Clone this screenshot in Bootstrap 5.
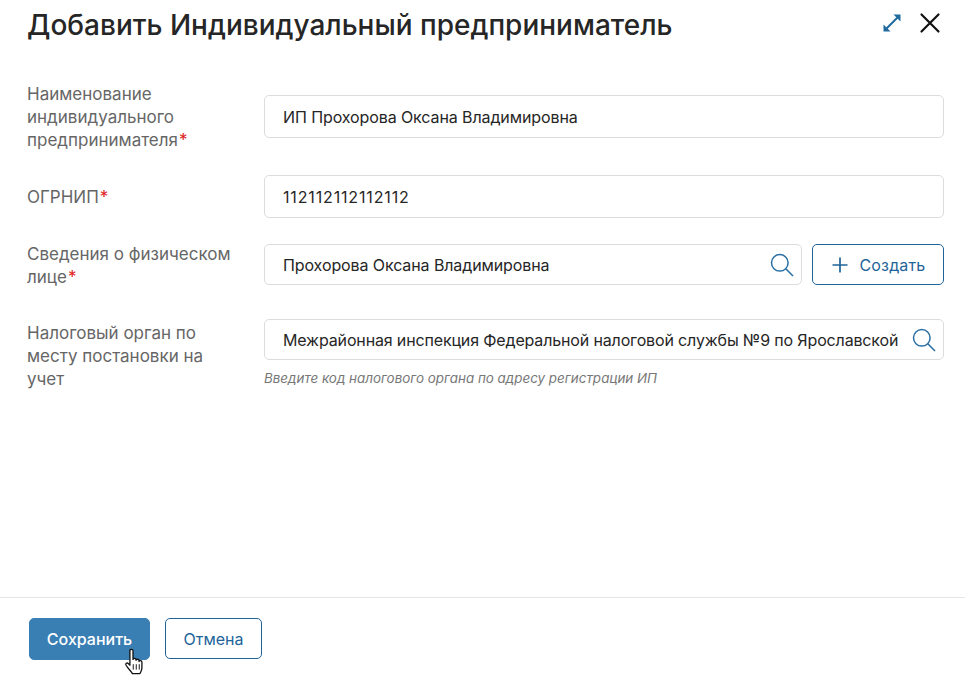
<!DOCTYPE html>
<html lang="ru">
<head>
<meta charset="utf-8">
<title>Добавить Индивидуальный предприниматель</title>
<link rel="stylesheet" href="https://cdn.jsdelivr.net/npm/bootstrap@5.3.0/dist/css/bootstrap.min.css">
<style>
html,body{height:100%;}
body{font-family:Inter,"Noto Sans",sans-serif;background:#fff;color:#262626;width:965px;height:675px;overflow:hidden;}
.dlg{height:675px;}
.dlg-head{height:50px;padding:0 24px 0 27px;}
.dlg-title{font-size:28px;font-weight:500;line-height:50px;margin:0;color:#262626;}
.head-tools{padding-bottom:4px;}
.head-ico{display:block;}
.dlg-body{padding:33px 21px 0 27px;}
.fld-label{width:237px;flex:none;font-size:17px;line-height:23px;color:#666;padding-right:20px;}
.lbl-2{margin-top:11px;}
.lbl-4{margin-top:3px;}
.req{color:#e02020;margin-left:1px;}
.fld{height:43px;border:1px solid #dcdcdc;border-radius:5px;padding:0 18px;font-size:16px;letter-spacing:-.1px;color:#262626;line-height:1;}
.fld-s{height:41px;}
.fld-srch{padding-right:6px;}
.fld-num{letter-spacing:.85px;}
.fld-long{letter-spacing:-.15px;}
.fld-text{white-space:nowrap;line-height:22px;}
.fld-s .fld-text{padding-top:1px;}
.fld-1{margin-top:12px;}
.pair-3{margin-top:1px;gap:10px;}
.f-row-a{margin-bottom:23px;}
.f-row-b{margin-bottom:25px;}
.f-row-c{margin-bottom:30px;}
.hint{font-size:13.4px;font-style:italic;color:#777;margin-top:9px;line-height:18px;}
.btn-make{height:41px;width:132px;flex:none;border:1px solid #1f6499;border-radius:5px;color:#1f6499;font-size:16px;letter-spacing:.15px;background:#fff;padding:0;gap:11px;}
.dlg-foot{border-top:1px solid #e6e6e6;height:78px;padding:20px 0 0 29px;position:relative;}
.btn-save{width:121px;height:42px;background:#3a7fb3;border:1px solid #3a7fb3;border-radius:5px;color:#fff;font-size:16px;font-weight:500;padding:0;}
.btn-undo{width:97px;height:41px;border:1px solid #1f6499;border-radius:5px;color:#1f6499;background:#fff;font-size:16px;padding:0;margin-left:15px;}
.ptr{position:absolute;left:123px;top:50px;}
</style>
</head>
<body>
<div class="dlg d-flex flex-column">
  <div class="dlg-head d-flex align-items-center justify-content-between">
    <h1 class="dlg-title">Добавить Индивидуальный предприниматель</h1>
    <div class="d-flex align-items-center gap-3 head-tools">
      <svg class="head-ico" width="22" height="22" viewBox="0 0 22 22" fill="none"><path d="M5.5 16.5 16.5 5.5" stroke="#1f6a9e" stroke-width="2"/><path d="M12.5 2.5h7v7z" fill="#1f6a9e"/><path d="M2.5 12.5v7h7z" fill="#1f6a9e"/></svg>
      <svg class="head-ico" width="22" height="22" viewBox="0 0 22 22" fill="none"><path d="M2.5 2.5 19.5 19.5M19.5 2.5 2.5 19.5" stroke="#111" stroke-width="2.2" stroke-linecap="round"/></svg>
    </div>
  </div>
  <div class="dlg-body flex-grow-1">
    <div class="d-flex align-items-start f-row-a">
      <div class="fld-label">Наименование индивидуального предпринимателя<span class="req">*</span></div>
      <div class="fld fld-1 flex-grow-1 d-flex align-items-center"><span class="fld-text">ИП Прохорова Оксана Владимировна</span></div>
    </div>
    <div class="d-flex align-items-start f-row-b">
      <div class="fld-label lbl-2">ОГРНИП<span class="req">*</span></div>
      <div class="fld flex-grow-1 d-flex align-items-center"><span class="fld-text fld-num">112112112112112</span></div>
    </div>
    <div class="d-flex align-items-start f-row-c">
      <div class="fld-label">Сведения о физическом лице<span class="req">*</span></div>
      <div class="flex-grow-1 d-flex pair-3 align-items-center">
        <div class="fld fld-s fld-srch flex-grow-1 d-flex align-items-center justify-content-between">
          <span class="fld-text">Прохорова Оксана Владимировна</span>
          <svg width="26" height="26" viewBox="0 0 26 26" fill="none"><circle cx="10.8" cy="10.8" r="8.3" stroke="#2a6fa3" stroke-width="1.5"/><path d="M16.8 16.8 24 24" stroke="#2a6fa3" stroke-width="1.6"/></svg>
        </div>
        <button type="button" class="btn btn-make d-flex align-items-center justify-content-center">
          <svg width="18" height="18" viewBox="0 0 18 18" fill="none"><path d="M9 1.5v15M1.5 9h15" stroke="#1f6499" stroke-width="1.7"/></svg>
          <span>Создать</span>
        </button>
      </div>
    </div>
    <div class="d-flex align-items-start">
      <div class="fld-label lbl-4">Налоговый орган по месту постановки на учет</div>
      <div class="flex-grow-1">
        <div class="fld fld-s fld-srch d-flex align-items-center justify-content-between">
          <span class="fld-text fld-long">Межрайонная инспекция Федеральной налоговой службы №9 по Ярославской</span>
          <svg class="flex-shrink-0" width="26" height="26" viewBox="0 0 26 26" fill="none"><circle cx="10.8" cy="10.8" r="8.3" stroke="#2a6fa3" stroke-width="1.5"/><path d="M16.8 16.8 24 24" stroke="#2a6fa3" stroke-width="1.6"/></svg>
        </div>
        <div class="hint">Введите код налогового органа по адресу регистрации ИП</div>
      </div>
    </div>
  </div>
  <div class="dlg-foot d-flex align-items-start">
    <button type="button" class="btn btn-save">Сохранить</button>
    <button type="button" class="btn btn-undo">Отмена</button>
    <svg class="ptr" width="21" height="27" viewBox="0 0 17 22.5"><path d="M5.5 2.2c0-1.5 2.6-1.5 2.6 0v7.3c0-1.2 2.5-1.2 2.5 0v.8c0-1.2 2.5-1.2 2.5 0v1c0-1.1 2.4-1 2.4.2v5.2c0 2.2-1 3.2-1.6 4.6H7.6c-1.2-2-3.4-3.8-5.3-6.9-.8-1.4.7-2.5 1.9-1.4l1.3 1.3z" fill="#fff" stroke="#111" stroke-width="1.1" stroke-linejoin="round"/><path d="M8.3 13.5v4.5M10.8 13.5v4.5M13.3 13.5v4.5" stroke="#111" stroke-width=".8"/></svg>
  </div>
</div>
<script src="https://cdn.jsdelivr.net/npm/bootstrap@5.3.0/dist/js/bootstrap.bundle.min.js"></script>
</body>
</html>
